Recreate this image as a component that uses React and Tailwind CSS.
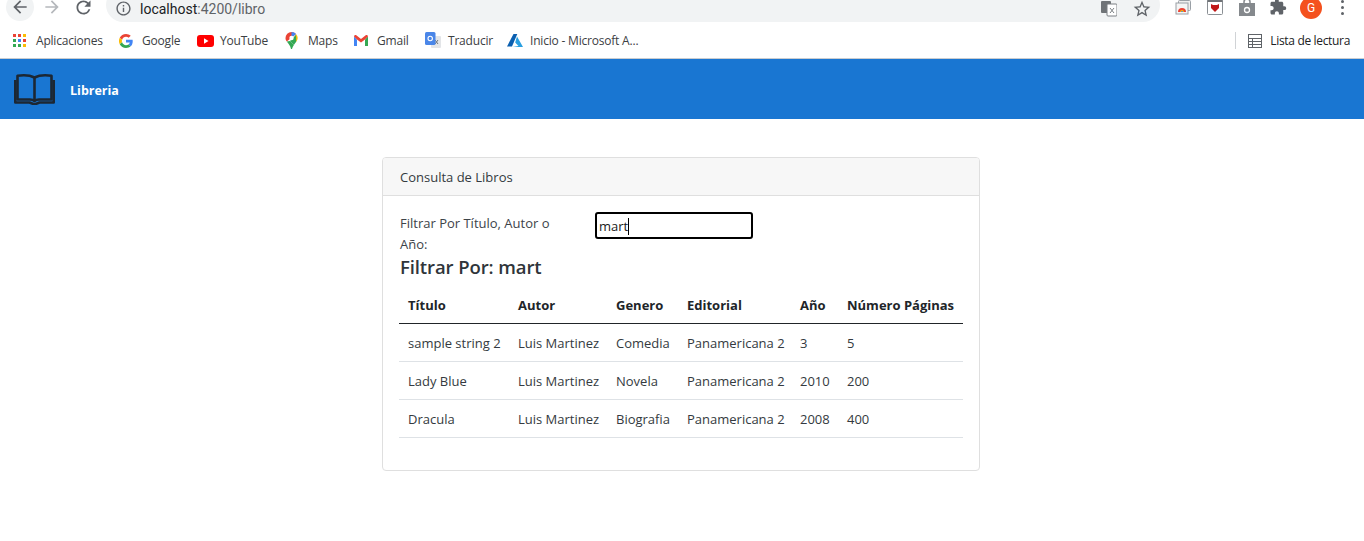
import React from "react";
import { MdArrowBack, MdArrowForward, MdRefresh, MdInfoOutline, MdStarBorder, MdExtension } from "react-icons/md";

const Google = () => (
  <svg width="14" height="14" viewBox="0 0 48 48"><path fill="#EA4335" d="M24 9.500c3.500 0 6.700 1.200 9.200 3.600l6.900-6.900C35.900 2.400 30.400 0 24 0 14.600 0 6.500 5.400 2.600 13.200l8 6.200C12.500 13.700 17.800 9.500 24 9.500z"/><path fill="#4285F4" d="M47 24.500c0-1.600-.2-3.100-.4-4.500H24v9h13c-.6 3-2.300 5.500-4.800 7.200l7.700 6C44.400 38 47 31.800 47 24.500z"/><path fill="#FBBC05" d="M10.600 28.600a14.500 14.500 0 0 1 0-9.200l-8-6.200a24 24 0 0 0 0 21.600l8-6.200z"/><path fill="#34A853" d="M24 48c6.500 0 11.900-2.100 15.900-5.800l-7.700-6c-2.100 1.500-4.900 2.300-8.200 2.300-6.200 0-11.500-4.200-13.400-9.900l-8 6.200C6.500 42.600 14.600 48 24 48z"/></svg>
);
const YouTube = () => (
  <svg width="17" height="12" viewBox="0 0 17 12"><rect width="17" height="12" rx="3" fill="#f00"/><path d="M7 3.300v5.400L11.500 6z" fill="#fff"/></svg>
);
const Maps = () => (
  <svg width="13" height="17" viewBox="0 0 13 17"><path d="M1.800 9.600c1.800 2.400 3.600 4.400 4.200 7.400h1c.3-1.500 1-2.800 1.900-4L5 9z" fill="#34A853"/><path d="M11 2.100A6 6 0 0 1 11.200 9.800L8 6.700z" fill="#FBBC05"/><path d="M6.500 0A6 6 0 0 0 .5 6c0 1.500.5 2.500 1.300 3.600L11 2.100A6 6 0 0 0 6.500 0z" fill="#EA4335"/><path d="M6.500 0c1.800 0 3.400.8 4.500 2.100L6.500 6z" fill="#4285F4"/><path d="M11.200 9.800c-.7 1-1.600 2.100-2.300 3.200L5 9l6-6z" fill="#34A853"/><circle cx="6.500" cy="6" r="2.200" fill="#fff"/></svg>
);
const Gmail = () => (
  <svg width="14" height="11" viewBox="0 0 14 11"><path d="M0 1.500V11h3V4.500L0 1.500z" fill="#4285F4"/><path d="M14 1.500V11h-3V4.500l3-3z" fill="#34A853"/><path d="M0 1.500C0 .3 1.300-.4 2.300.3L7 4l4.700-3.700c1-.7 2.300 0 2.300 1.200L11 4.500 7 7.500 3 4.500 0 1.500z" fill="#EA4335"/></svg>
);
const Translate = () => (
  <svg width="16" height="17" viewBox="0 0 16 17"><rect x="6" y="4" width="10" height="12" rx="1" fill="#e3e5e8"/><path d="M10 8l3 4M13 8l-3 4" stroke="#70757a" strokeWidth="1"/><rect width="10.500" height="13" rx="1.500" fill="#4a86e8"/><circle cx="5.200" cy="6.500" r="2.200" fill="none" stroke="#fff" strokeWidth="1.100"/></svg>
);
const Azure = () => (
  <svg width="16" height="13" viewBox="0 0 16 13"><path d="M6.500 0h3.800L5 12.500H0z" fill="#0a5fb0"/><path d="M10 2.500 16 13H5.500l6-1-3.300-3.500z" fill="#2a9fe0"/></svg>
);
const AppsGrid = () => {
  const colors = ["#ea4335", "#ea4335", "#fbbc05", "#34a853", "#4285f4", "#ea4335", "#34a853", "#34a853", "#fbbc05"];
  return (
    <div className="grid grid-cols-3 gap-[2px] w-[13px]">
      {colors.map((c, i) => <span key={i} className="w-[3px] h-[3px]" style={{ backgroundColor: c }} />)}
    </div>
  );
};
const Book = () => (
  <svg width="41" height="31" viewBox="0 0 41 31" fill="none" stroke="#1c2733" strokeWidth="2.600" strokeLinejoin="round">
    <path d="M3.500 1.800C9 1 15.500 1 20.500 3.500 25.500 1 32 1 37.500 1.800V25.500H25c-2 0-3.500.5-4.500 1.500-1-1-2.500-1.500-4.500-1.500H3.500z" />
    <path d="M20.500 3.500V26" />
    <path d="M1.300 6V28.500H15.500l5 2 5-2h14.200V6" />
  </svg>
);

const bookmarks = [
  { icon: <AppsGrid />, label: "Aplicaciones", w: "w-[106px]" },
  { icon: <Google />, label: "Google", w: "w-[78px]" },
  { icon: <YouTube />, label: "YouTube", w: "w-[88px]" },
  { icon: <Maps />, label: "Maps", w: "w-[69px]" },
  { icon: <Gmail />, label: "Gmail", w: "w-[71px]" },
  { icon: <Translate />, label: "Traducir", w: "w-[82px]" },
  { icon: <Azure />, label: "Inicio - Microsoft A...", w: "w-[140px]" },
];

const rows = [
  ["sample string 2", "Luis Martinez", "Comedia", "Panamericana 2", "3", "5"],
  ["Lady Blue", "Luis Martinez", "Novela", "Panamericana 2", "2010", "200"],
  ["Dracula", "Luis Martinez", "Biografia", "Panamericana 2", "2008", "400"],
];
const heads = ["Título", "Autor", "Genero", "Editorial", "Año", "Número Páginas"];

export default function App() {
  return (
    <div className="h-[541px] bg-white overflow-hidden font-['Open_Sans','Noto_Sans',sans-serif] text-[#212529]">
      <div className="h-[22px] overflow-hidden flex items-start">
        <div className="w-[28px] h-[28px] ml-[6px] -mt-[7px] rounded-full bg-[#f1f3f4] flex items-center justify-center shrink-0">
          <MdArrowBack size={20} color="#5f6368" />
        </div>
        <MdArrowForward size={20} color="#b5b8bc" className="ml-[8px] -mt-[3px] shrink-0" />
        <MdRefresh size={21} color="#5f6368" className="ml-[11px] -mt-[3px] shrink-0" />
        <div className="ml-[12px] w-[1054px] h-[34px] -mt-[12px] rounded-full bg-[#f1f3f4] flex items-center pt-[7px] shrink-0">
          <MdInfoOutline size={17} color="#5f6368" className="ml-[9px]" />
          <span className="ml-[8px] text-[14px] leading-[16px] font-['Roboto',sans-serif] text-[#5f6368]"><span className="text-[#202124]">localhost</span>:4200/libro</span>
          <div className="ml-auto flex items-center">
            <svg width="16" height="16" viewBox="0 0 16 16"><rect width="10" height="12" x="0" y="0" rx="1" fill="#6f7377"/><rect x="6" y="3" width="10" height="12" rx="1" fill="#fff" stroke="#7b7f83"/><path d="M9 7l4 5M13 7l-4 5" stroke="#7b7f83"/></svg>
            <MdStarBorder size={20} color="#5f6368" className="ml-[15px] mr-[8px]" />
          </div>
        </div>
        <div className="ml-[15px] flex items-start -mt-[1px]">
          <svg width="16" height="16" viewBox="0 0 16 16"><rect x="3.500" y="1.500" width="12" height="10" rx="1" fill="#eee" stroke="#9aa0a6"/><rect x="1" y="4" width="12" height="11" fill="#f5f5f5" stroke="#9aa0a6"/><path d="M3 13a4 4 0 0 1 8 0z" fill="#ea4335"/><path d="M5 13a2 2 0 0 1 4 0z" fill="#fbbc05"/><path d="M6 13a1 1 0 0 1 2 0z" fill="#4285f4"/></svg>
          <svg width="16" height="16" viewBox="0 0 16 16" className="ml-[16px]"><rect x=".5" y=".5" width="15" height="15" rx="1" fill="#fff" stroke="#8a8f94"/><rect x=".5" y=".5" width="15" height="2.500" fill="#6f7377"/><path d="M4 5l2 1h4l2-1v4l-4 4-4-4z" fill="#c01818"/></svg>
          <svg width="16" height="17" viewBox="0 0 16 17" className="ml-[16px]"><path d="M0 4h16v13H0z" fill="#85898d"/><path d="M5 5V3a3 3 0 0 1 6 0v2" fill="none" stroke="#85898d" strokeWidth="1.500"/><circle cx="8" cy="11" r="2.500" fill="none" stroke="#fff" strokeWidth="1.300"/></svg>
          <MdExtension size={18} color="#5f6368" className="ml-[14px] -mt-[1px]" />
          <div className="ml-[13px] -mt-[2px] w-[22px] h-[22px] rounded-full bg-[#f4511e] text-white text-[12px] font-['Roboto',sans-serif] flex items-center justify-center">G</div>
          <div className="ml-[19px] flex flex-col gap-[3px] pt-[1px]">
            <span className="w-[3px] h-[3px] rounded-full bg-[#5f6368]" />
            <span className="w-[3px] h-[3px] rounded-full bg-[#5f6368]" />
            <span className="w-[3px] h-[3px] rounded-full bg-[#5f6368]" />
          </div>
        </div>
      </div>

      <div className="h-[37px] border-b border-[#c9ccd0] flex items-center text-[12px] text-[#3c4043] font-['Open_Sans',sans-serif] tracking-[-0.2px] pl-[13px] pt-[1px]">
        {bookmarks.map((b) => (
          <div key={b.label} className={`flex items-center shrink-0 ${b.w}`}>
            <span className="w-[23px] shrink-0 flex items-center">{b.icon}</span>
            <span className="whitespace-nowrap">{b.label}</span>
          </div>
        ))}
        <div className="ml-auto flex items-center">
          <div className="w-px h-[17px] bg-[#d0d3d6]" />
          <svg width="14" height="14" viewBox="0 0 14 14" fill="none" stroke="#5f6368" className="ml-[12px]"><rect x=".5" y=".5" width="13" height="13"/><path d="M.5 4.500h13M.5 7.500h13M.5 10.500h13M4.500 4.500V13.500" /></svg>
          <span className="ml-[8px] mr-[14px] whitespace-nowrap text-[#202124] tracking-[-0.33px]">Lista de lectura</span>
        </div>
      </div>

      <div className="h-[60px] bg-[#1976d2] flex items-center pl-[14px]">
        <Book />
        <span className="ml-[15px] pt-[4px] text-white text-[12.5px] font-bold">Libreria</span>
      </div>

      <div className="flex justify-center pt-[38px] pr-[2px]">
        <div className="w-[598px] h-[314px] border border-[#dfdfdf] rounded-[4px] overflow-hidden">
          <div className="h-[38px] bg-[#f7f7f7] border-b border-[#dfdfdf] flex items-center px-[17px] pt-[3px] text-[13px] text-[#343a40]">
            Consulta de Libros
          </div>
          <div className="pt-[16px] px-[16px]">
            <div className="flex items-start">
              <label className="w-[196px] pl-px text-[13px] leading-[21px] pr-[30px] pt-[1px] text-[#3d4349]">Filtrar Por Título, Autor o Año:</label>
              <div className="w-[158px] h-[27px] border-2 border-black rounded-[3px] flex items-center pl-[2px] pt-[3px] text-[13px] bg-white text-[#1a1a1a]">
                mart<span className="w-px h-[17px] bg-black -mt-[2px]" />
              </div>
            </div>
            <div className="text-[18.500px] leading-[22px] font-semibold pl-px pt-[1px] text-[#2f353a] tracking-[-0.1px]">Filtrar Por: mart</div>
            <table className="mt-[8px] w-[564px] table-fixed border-collapse text-[13px] text-[#212529]">
              <colgroup>
                <col className="w-[110px]" />
                <col className="w-[98px]" />
                <col className="w-[71px]" />
                <col className="w-[113px]" />
                <col className="w-[47px]" />
                <col className="w-[125px]" />
              </colgroup>
              <thead>
                <tr className="h-[37px] border-b border-[#212529]">
                  {heads.map((h) => <th key={h} className="text-left font-bold pl-[9px] pt-[3px] whitespace-nowrap">{h}</th>)}
                </tr>
              </thead>
              <tbody>
                {rows.map((r) => (
                  <tr key={r[0]} className="h-[38px] border-b border-[#dee2e6]">
                    {r.map((c, i) => <td key={i} className="pl-[9px] pt-[3px] whitespace-nowrap text-[#343a40]">{c}</td>)}
                  </tr>
                ))}
              </tbody>
            </table>
          </div>
        </div>
      </div>
    </div>
  );
}
